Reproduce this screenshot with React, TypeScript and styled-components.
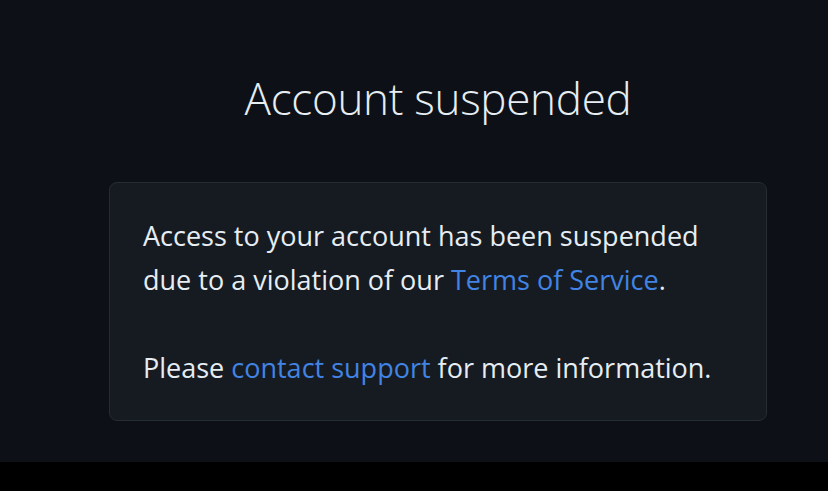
import React from "react";
import styled, { createGlobalStyle } from "styled-components";

const GlobalStyle = createGlobalStyle`
  html, body {
    margin: 0;
    padding: 0;
    background: #000;
  }
  body {
    font-family: "Open Sans", "Noto Sans", sans-serif;
  }
`;

function App() {
  return (
    <>
      <GlobalStyle />
      <Page>
        <Column>
          <Title>Account suspended</Title>
          <Card>
            <Paragraph>
              Access to your account has been suspended due to a violation of our{" "}
              <Link href="#">Terms of Service</Link>.
            </Paragraph>
            <Paragraph>
              Please <Link href="#">contact support</Link> for more information.
            </Paragraph>
          </Card>
        </Column>
      </Page>
    </>
  );
}

export default App;

const Page = styled.main`
  height: 462px;
  background: #0d1117;
  display: flex;
  box-sizing: border-box;
  padding: 70px 0 0 109px;
`;

const Column = styled.div`
  width: 658px;
  display: flex;
  flex-direction: column;
  align-items: center;
`;

const Title = styled.h1`
  margin: 0 0 56px;
  font-size: 44px;
  font-weight: 300;
  line-height: 56px;
  color: #e6edf3;
  letter-spacing: -0.3px;
`;

const Card = styled.section`
  align-self: stretch;
  box-sizing: border-box;
  height: 239px;
  padding: 31px 33px 27px;
  background: #161b22;
  border: 1px solid #262c34;
  border-radius: 8px;
`;

const Paragraph = styled.p`
  margin: 0 0 44px;
  font-size: 27px;
  line-height: 44px;
  color: #e6edf3;

  &:last-child {
    margin-bottom: 0;
  }
`;

const Link = styled.a`
  color: #4184e4;
  text-decoration: none;
`;
